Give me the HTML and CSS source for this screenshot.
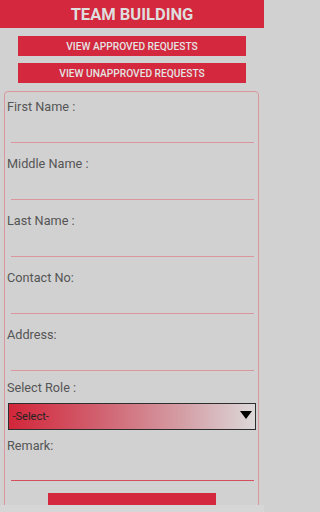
FILE: index.html
```html
<!DOCTYPE html>
<html>
<head>
<meta charset="utf-8">
<link rel="stylesheet" href="styles.css">
</head>
<body>
<div class="screen">
  <div class="header">TEAM BUILDING</div>
  <div class="btn">VIEW APPROVED REQUESTS</div>
  <div class="btn btn2">VIEW UNAPPROVED REQUESTS</div>
  <div class="card">
    <div class="field"><div class="label">First Name :</div><div class="input"></div></div>
    <div class="field"><div class="label">Middle Name :</div><div class="input"></div></div>
    <div class="field"><div class="label">Last Name :</div><div class="input"></div></div>
    <div class="field"><div class="label">Contact No:</div><div class="input"></div></div>
    <div class="field"><div class="label">Address:</div><div class="input"></div></div>
    <div class="label role">Select Role :</div>
    <div class="select"><span>-Select-</span><span class="tri"></span></div>
    <div class="label remark">Remark:</div>
    <div class="input red"></div>
    <div class="submit"></div>
  </div>
</div>
<div class="footer"></div>
</body>
</html>
```
FILE: styles.css
```css
html, body { margin: 0; padding: 0; background: #d1d1d1; }
body {
  font-family: Roboto, "Liberation Sans", sans-serif;
  width: 264px;
}
.screen {
  height: 505px;
  overflow: hidden;
  display: flex;
  flex-direction: column;
}
.header {
  flex: none;
  height: 28px;
  background: #d3283d;
  color: #dedede;
  font-weight: 700;
  font-size: 16.5px;
  display: flex;
  align-items: center;
  justify-content: center;
}
.btn {
  flex: none;
  margin: 8px 18px 0 18px;
  height: 20px;
  background: #d3283d;
  color: #e4e4e4;
  font-size: 10.2px;
  font-weight: 500;
  display: flex;
  align-items: center;
  justify-content: center;
}
.btn2 { margin-top: 7px; }
.card {
  flex: none;
  margin: 7.5px 5px 0 4px;
  border: 1.5px solid #d9969c;
  border-radius: 4px;
  padding: 7.5px 1px 0 2px;
  height: 600px;
}
.label {
  font-size: 12.7px;
  line-height: 16px;
  color: #555;
}
.field { margin-bottom: 13.5px; }
.input {
  height: 26.5px;
  margin: 0 3px 0 4px;
  border-bottom: 1.5px solid #d9969c;
}
.field:nth-child(5) { margin-bottom: 9px; }
.select {
  box-sizing: border-box;
  margin: 7px 1.5px 0 0.5px;
  height: 27px;
  border: 1px solid #2e2e2e;
  background: linear-gradient(to right, #d3263a 0%, #d15e6d 35%, #d4a1a8 72%, #dcd8d9 100%);
  display: flex;
  align-items: center;
  justify-content: space-between;
  padding: 0 3px 0 4px;
  font-size: 11px;
  color: #222;
}
.tri {
  width: 0;
  height: 0;
  border-left: 6px solid transparent;
  border-right: 6px solid transparent;
  border-top: 8px solid #000;
  margin-bottom: 2px;
}
.remark { margin-top: 8px; }
.input.red {
  height: 26px;
  border-bottom: 1.5px solid #d5505c;
}
.submit {
  margin: 12.5px auto 0 auto;
  width: 168px;
  height: 30px;
  background: #d3283d;
}
.footer {
  height: 7px;
  background: #d6d6d6;
}
```
